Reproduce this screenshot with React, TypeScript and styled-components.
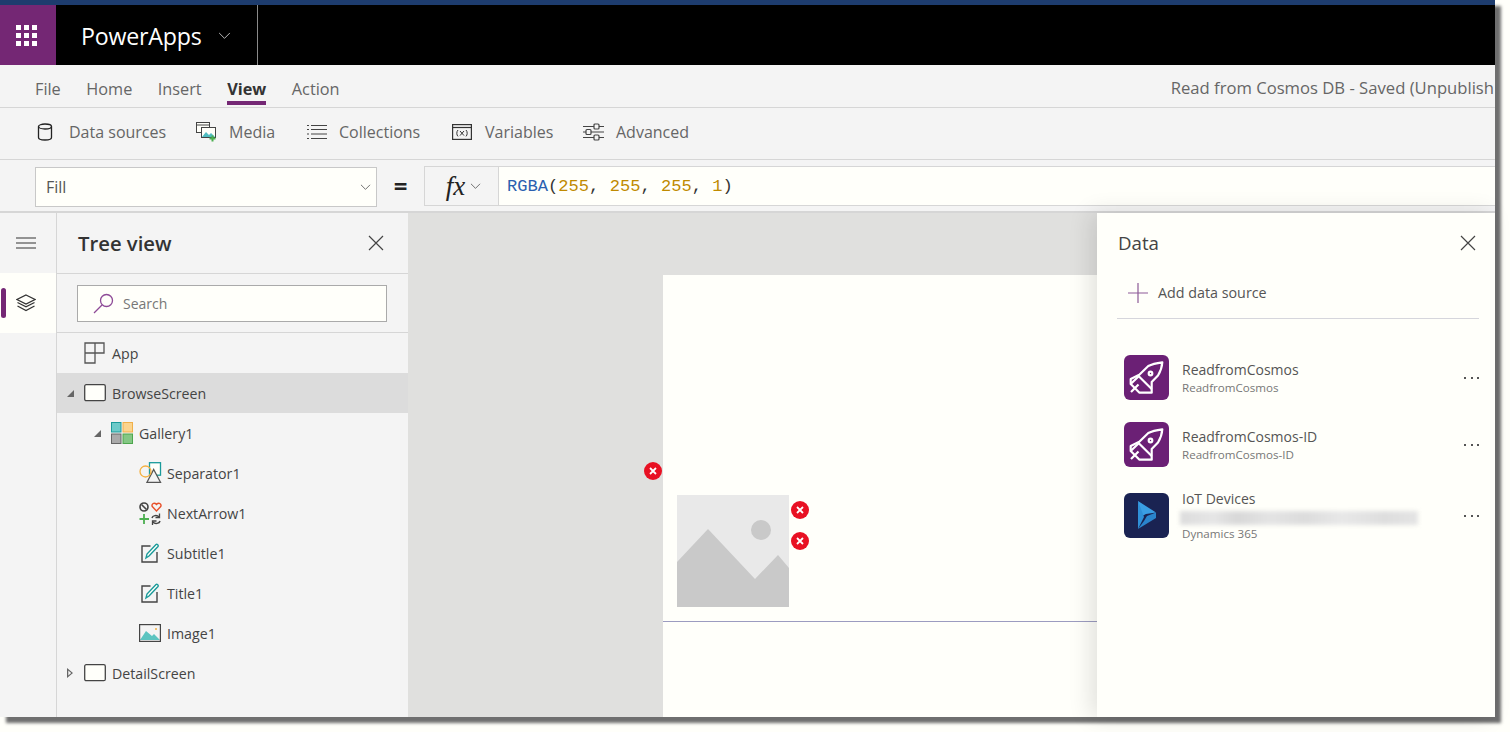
import styled, { createGlobalStyle } from 'styled-components';

const GlobalStyle = createGlobalStyle`
  html, body { margin: 0; padding: 0; background: #fffffa; }
  body { font-family: "Open Sans", "Liberation Sans", sans-serif; }
`;

const Page = styled.div`
  width: 1510px;
  height: 732px;
  overflow: hidden;
`;

const Shell = styled.div`
  width: 1495px;
  height: 717px;
  display: flex;
  flex-direction: column;
  background: #f4f4f4;
  box-shadow: 6px 6px 3px #6f6f6f;
`;

const TopStripe = styled.div`
  height: 5px;
  flex: none;
  background: #1d3c6e;
`;

const TitleBar = styled.header`
  height: 60px;
  flex: none;
  display: flex;
  align-items: stretch;
  background: #000;
  color: #fff;
`;

const Waffle = styled.div`
  width: 56px;
  background: #742774;
  display: flex;
  align-items: center;
  justify-content: center;
  padding-right: 3px;
  box-sizing: border-box;
`;

const WaffleGrid = styled.div`
  display: grid;
  grid-template-columns: repeat(3, 5px);
  grid-auto-rows: 5px;
  gap: 3px;
  & > i { background: #fff; }
`;

const Brand = styled.div`
  width: 202px;
  box-sizing: border-box;
  padding: 2px 0 0 25px;
  display: flex;
  align-items: center;
  gap: 16px;
  border-right: 1px solid #8a8a8a;
  font-size: 23.2px;
  letter-spacing: -0.2px;
`;

const MenuBar = styled.nav`
  height: 42px;
  flex: none;
  display: flex;
  align-items: flex-start;
  padding-left: 35px;
  gap: 25.5px;
  border-bottom: 1px solid #d6d6d6;
`;

const MenuItem = styled.div<{ $active?: boolean }>`
  display: flex;
  align-items: center;
  font-size: 16.3px;
  height: 35px;
  margin-top: 5px;
  padding-top: 6px;
  color: ${p => (p.$active ? '#333' : '#666')};
  font-weight: ${p => (p.$active ? 700 : 400)};
  border-bottom: ${p => (p.$active ? '4px solid #742774' : '4px solid transparent')};
  box-sizing: border-box;
`;

const SaveStatus = styled.div`
  margin-left: auto;
  padding-right: 1px;
  white-space: nowrap;
  font-size: 16.65px;
  line-height: 24px;
  color: #666;
  margin-top: 11px;
`;

const ToolBar = styled.div`
  height: 52px;
  flex: none;
  box-sizing: border-box;
  display: flex;
  align-items: center;
  padding: 0 0 3px 36px;
  border-bottom: 1px solid #d6d6d6;
`;

const ToolButton = styled.div<{ $width: number; $gap: number }>`
  width: ${p => p.$width}px;
  display: flex;
  align-items: center;
  gap: ${p => p.$gap}px;
  font-size: 16px;
  color: #666;
  white-space: nowrap;
`;

const FormulaRow = styled.div`
  height: 53px;
  flex: none;
  box-sizing: border-box;
  display: flex;
  align-items: flex-start;
  padding: 6px 0 0 35px;
  border-bottom: 2px solid #d6d6d6;
`;

const PropertySelect = styled.div`
  width: 342px;
  height: 40px;
  box-sizing: border-box;
  margin-top: 1px;
  display: flex;
  align-items: center;
  justify-content: space-between;
  padding: 0 5px 0 10px;
  background: #fffffa;
  border: 1px solid #c8c8c8;
  font-size: 16px;
  color: #555;
`;

const EqualsSign = styled.div`
  width: 47px;
  text-align: center;
  font-size: 24px;
  font-weight: 700;
  line-height: 40px;
  color: #222;
`;

const FxButton = styled.div`
  width: 75px;
  height: 40px;
  box-sizing: border-box;
  display: flex;
  align-items: center;
  justify-content: center;
  gap: 5px;
  padding-left: 4px;
  border: 1px solid #d6d6d6;
  font-family: "Liberation Serif", serif;
  font-style: italic;
  font-size: 27px;
  color: #222;
`;

const FormulaInput = styled.div`
  flex: 1;
  height: 40px;
  box-sizing: border-box;
  display: flex;
  align-items: center;
  padding-left: 8px;
  background: #fffffa;
  border-top: 1px solid #d6d6d6;
  border-bottom: 1px solid #d6d6d6;
  font-family: "Liberation Mono", monospace;
  font-size: 17.1px;
  color: #333;
  white-space: pre;
`;

const Fn = styled.span`
  color: #2b5fb0;
`;

const Num = styled.span`
  color: #c08a00;
`;

const Workspace = styled.div`
  flex: 1;
  min-height: 0;
  display: flex;
`;

const Rail = styled.aside`
  width: 56px;
  flex: none;
  border-right: 1px solid #d6d6d6;
`;

const RailButton = styled.div<{ $active?: boolean }>`
  height: 60px;
  box-sizing: border-box;
  padding-right: 4px;
  position: relative;
  display: flex;
  align-items: center;
  justify-content: center;
  background: ${p => (p.$active ? '#fffffa' : 'transparent')};
`;

const RailPill = styled.span`
  position: absolute;
  left: 1px;
  top: 15px;
  width: 5px;
  height: 30px;
  border-radius: 3px;
  background: #742774;
`;

const TreePanel = styled.section`
  width: 351px;
  flex: none;
`;

const PanelHeader = styled.div`
  height: 60px;
  display: flex;
  align-items: center;
  justify-content: space-between;
  padding: 0 24px 0 21px;
  border-bottom: 1px solid #d6d6d6;
`;

const TreeTitle = styled.h2`
  margin: 0;
  font-size: 20.3px;
  font-weight: 600;
  color: #333;
`;

const SearchRow = styled.div`
  height: 59px;
  box-sizing: border-box;
  padding: 11px 21px 0 20px;
  border-bottom: 1px solid #d6d6d6;
`;

const SearchBox = styled.div`
  height: 37px;
  box-sizing: border-box;
  display: flex;
  align-items: center;
  gap: 9px;
  padding-left: 15px;
  background: #fffffa;
  border: 1px solid #aaa;
  font-size: 14px;
  color: #777;
`;

const TreeRow = styled.div<{ $indent: number; $selected?: boolean }>`
  height: 40px;
  display: flex;
  align-items: center;
  padding-left: ${p => p.$indent}px;
  background: ${p => (p.$selected ? '#dcdcdc' : 'transparent')};
  font-size: 14.2px;
  color: #444;
`;

const Twisty = styled.span`
  width: 18px;
  flex: none;
  display: flex;
`;

const TreeIconSlot = styled.span`
  width: 28px;
  flex: none;
  display: flex;
`;

const Canvas = styled.main`
  flex: 1;
  min-width: 0;
  position: relative;
  box-sizing: border-box;
  padding: 62px 0 0 255px;
  background: #e0e0de;
`;

const Artboard = styled.div`
  height: 100%;
  position: relative;
  background: #fffffa;
`;

const Placeholder = styled.div`
  position: absolute;
  left: 14px;
  top: 220px;
  width: 112px;
  height: 112px;
  background: #e9e9e9;
  display: flex;
`;

const ErrorDot = styled.span<{ $x: number; $y: number }>`
  position: absolute;
  left: ${p => p.$x}px;
  top: ${p => p.$y}px;
  width: 18px;
  height: 18px;
  border-radius: 50%;
  background: #e81123;
  display: flex;
  align-items: center;
  justify-content: center;
`;

const SeparatorLine = styled.div`
  position: absolute;
  left: 0;
  right: 0;
  top: 346px;
  height: 1px;
  background: #9c9cc0;
`;

const DataPanel = styled.section`
  width: 398px;
  flex: none;
  position: relative;
  box-sizing: border-box;
  padding: 0 16px 0 20px;
  background: #fffffa;
  box-shadow: -6px 0 22px rgba(0, 0, 0, 0.12);
`;

const DataHeader = styled.div`
  height: 60px;
  display: flex;
  align-items: center;
  justify-content: space-between;
  padding-right: 3px;
`;

const DataTitle = styled.h2`
  margin: 0 0 1px 1px;
  font-size: 18.7px;
  font-weight: 400;
  color: #444;
`;

const AddSource = styled.div`
  height: 46px;
  box-sizing: border-box;
  display: flex;
  align-items: center;
  gap: 10px;
  padding: 0 0 6px 11px;
  border-bottom: 1px solid #d6d6dc;
  font-size: 14.3px;
  color: #555;
`;

const SourceList = styled.div`
  padding: 36px 0 0 7px;
`;

const SourceRow = styled.div<{ $gap: number }>`
  display: flex;
  align-items: center;
  height: 45px;
  margin-bottom: ${p => p.$gap}px;
`;

const SourceIcon = styled.div<{ $color: string }>`
  width: 45px;
  height: 45px;
  flex: none;
  border-radius: 6px;
  background: ${p => p.$color};
  display: flex;
`;

const SourceText = styled.div`
  flex: 1;
  min-width: 0;
  padding: 2px 0 0 13px;
`;

const SourceName = styled.div`
  font-size: 14px;
  line-height: 18px;
  color: #555;
`;

const SourceSub = styled.div`
  font-size: 11.6px;
  line-height: 18px;
  color: #777;
`;

const BlurredLine = styled.div`
  width: 238px;
  height: 14px;
  margin: 3px 0 0 -2px;
  background: linear-gradient(90deg, #dcdcdc, #e6e6e6 14%, #d8d8d8 24%, #e4e4e4 38%, #dcdcdc 52%, #e8e8e8 68%, #dedede 86%, #e4e4e4);
  filter: blur(2px);
`;

const MoreDots = styled.div`
  width: 15px;
  flex: none;
  display: flex;
  justify-content: space-between;
  & > i {
    width: 2px;
    height: 2px;
    background: #555;
  }
`;

const Chevron = ({ color = '#555', size = 13 }: { color?: string; size?: number }) => (
  <svg width={size} height={size * 0.6} viewBox="0 0 13 8" fill="none" stroke={color} strokeWidth="1">
    <path d="M1 1l5.5 5.5L12 1" />
  </svg>
);

const CloseIcon = () => (
  <svg width="16" height="16" viewBox="0 0 16 16" stroke="#444" strokeWidth="1.2">
    <path d="M1 1l14 14M15 1L1 15" />
  </svg>
);

const CylinderIcon = () => (
  <svg width="18" height="18" viewBox="0 0 18 18" fill="none" stroke="#222" strokeWidth="1.3">
    <ellipse cx="9" cy="3.5" rx="6.5" ry="2.5" />
    <path d="M2.5 3.5v11c0 1.4 2.9 2.500 6.5 2.500s6.5-1.100 6.5-2.500v-11" />
  </svg>
);

const MediaIcon = () => (
  <svg width="21" height="20" viewBox="0 0 21 20" fill="none">
    <rect x="0.5" y="0.5" width="13" height="10" stroke="#444" fill="#fffffa" />
    <path d="M0.5 3h13" stroke="#444" />
    <rect x="5.5" y="5.5" width="14" height="10" stroke="#444" fill="#fffffa" />
    <path d="M6 15l4-5 3 3 2-2 4 4z" fill="#4fbcc0" />
    <path d="M13.5 16.5h6M16.5 13.5v6" stroke="#4caf50" strokeWidth="2" />
  </svg>
);

const ListIcon = () => (
  <svg width="20" height="16" viewBox="0 0 20 16" stroke="#444" strokeWidth="1.2">
    <path d="M4 1.5h16M4 5.5h16M4 10h16M4 14.5h16M0 1.5h2M0 5.5h2M0 10h2M0 14.5h2" />
  </svg>
);

const VariablesIcon = () => (
  <svg width="20" height="16" viewBox="0 0 20 16" fill="none">
    <rect x="0.6" y="0.6" width="18.8" height="14.8" stroke="#333" strokeWidth="1.2" />
    <path d="M0.6 3.5h18.8" stroke="#333" strokeWidth="1.2" />
    <path d="M6 6c-1.6 1.600-1.600 5 0 6.400M14 6c1.600 1.600 1.600 5 0 6.400M8 7l4 4.600M12 7l-4 4.600" stroke="#333" />
  </svg>
);

const SlidersIcon = () => (
  <svg width="21" height="18" viewBox="0 0 21 18" fill="none" stroke="#444" strokeWidth="1.2">
    <path d="M0 3.5h11M16 3.5h5M0 9h3M8 9h13M0 14.5h11M16 14.5h5" />
    <rect x="11" y="1" width="5" height="5" rx="1" />
    <rect x="3" y="6.5" width="5" height="5" rx="1" />
    <rect x="11" y="12" width="5" height="5" rx="1" />
  </svg>
);

const LayersIcon = () => (
  <svg width="20" height="18" viewBox="0 0 20 18" fill="none" stroke="#333" strokeWidth="1.3">
    <path d="M10 1l9 4.500-9 4.500-9-4.500z" />
    <path d="M1.500 8.500l8.500 4.300 8.500-4.300M1.500 12l8.500 4.500 8.500-4.500" />
  </svg>
);

const HamburgerIcon = () => (
  <svg width="20" height="12" viewBox="0 0 20 12" stroke="#333" strokeWidth="1">
    <path d="M0 1h20M0 6h20M0 11h20" />
  </svg>
);

const SearchGlass = () => (
  <svg width="21" height="21" viewBox="0 0 21 21" fill="none" stroke="#8d4a97" strokeWidth="1.3">
    <circle cx="13.5" cy="7.5" r="6" />
    <path d="M9 12L1 20" />
  </svg>
);

const Arrow = ({ open }: { open?: boolean }) => (
  <svg width="9" height="11" viewBox="0 0 9 11" fill="#666">
    {open ? <path d="M8 2v7H1z" /> : <path d="M1 0l6 5-6 5zM2.300 2.600v4.800L5.200 5z" fillRule="evenodd" />}
  </svg>
);

const AppIcon = () => (
  <svg width="21" height="22" viewBox="0 0 21 22" fill="none" stroke="#555" strokeWidth="1.3">
    <path d="M1 1h10v10H1zM11 1h9v10h-9M1 11v10h10V11" />
  </svg>
);

const ScreenIcon = () => (
  <svg width="22" height="18" viewBox="0 0 22 18" fill="#fffffa" stroke="#444" strokeWidth="1.3">
    <rect x="0.7" y="0.7" width="20.6" height="16" rx="1.5" />
  </svg>
);

const GalleryIcon = () => (
  <svg width="22" height="22" viewBox="0 0 22 22" strokeWidth="1">
    <rect x="0.5" y="0.5" width="9.5" height="9.5" fill="#6ccac9" stroke="#1a9a9a" />
    <rect x="12" y="0.5" width="9.5" height="9.5" fill="#fbd48e" stroke="#f0b04a" />
    <rect x="0.5" y="12" width="9.5" height="9.5" fill="#aaa" stroke="#666" />
    <rect x="12" y="12" width="9.5" height="9.5" fill="#84c784" stroke="#4da64d" />
  </svg>
);

const ShapesIcon = () => (
  <svg width="23" height="22" viewBox="0 0 23 22" fill="none" strokeWidth="1.3">
    <rect x="10.500" y="0.700" width="11" height="12.500" stroke="#1a9a9a" fill="#fffffa" />
    <path d="M14.700 7.500L21.500 20.300H8z" stroke="#555" fill="#f4f4f4" />
    <circle cx="6.500" cy="9.500" r="5.500" stroke="#f5b041" />
  </svg>
);

const IconsIcon = () => (
  <svg width="23" height="24" viewBox="0 0 23 24" fill="none">
    <circle cx="5" cy="6" r="4" stroke="#444" strokeWidth="1.6" />
    <path d="M2.500 3.500l5 5" stroke="#444" strokeWidth="1.6" />
    <path d="M17.500 10l-4-4.200c-1.800-2.400 1.400-5 4-2.400 2.600-2.600 5.800 0 4 2.400z" stroke="#e8502a" strokeWidth="1.4" />
    <path d="M5 13v10M0.500 18h9.500" stroke="#4caf50" strokeWidth="1.8" />
    <path d="M13 17c.5-2.500 5-3.500 7-1M21 20c-.5 2.500-5 3.500-7 1" stroke="#444" strokeWidth="1.5" />
    <path d="M20.500 12.500v4h-4M13.500 24v-4h4" stroke="#444" strokeWidth="1.3" />
  </svg>
);

const EditIcon = () => (
  <svg width="21" height="20" viewBox="-2 0 21 20" fill="none">
    <path d="M9.500 3H1v16h15V9" stroke="#444" strokeWidth="1.4" />
    <path d="M5 15l1-4 9-9.500c1-.8 2.800.8 2 2L8 13z" stroke="#1a9a9a" strokeWidth="1.4" fill="#fffffa" />
  </svg>
);

const PictureIcon = () => (
  <svg width="22" height="18" viewBox="0 0 22 18" fill="none">
    <path d="M1 16l6-9 6 5 2-2 6 6z" fill="#5cc4c0" />
    <rect x="0.600" y="0.600" width="20.800" height="16.800" stroke="#444" strokeWidth="1.2" />
    <circle cx="17" cy="5" r="1" fill="#f5b041" />
  </svg>
);

const PlusIcon = () => (
  <svg width="20" height="20" viewBox="0 0 20 20" stroke="#8d5a97" strokeWidth="1.2">
    <path d="M0 10h20M10 0v20" />
  </svg>
);

const ErrorMark = () => (
  <svg width="8" height="8" viewBox="0 0 8 8" stroke="#fff" strokeWidth="1.8">
    <path d="M1 1l6 6M7 1L1 7" />
  </svg>
);

const RocketIcon = () => (
  <svg width="45" height="45" viewBox="0 0 45 45" fill="none" stroke="#fff" strokeWidth="2.2" strokeLinejoin="round">
    <path d="M38.300 7.300C33 8 28 9 24.300 11L15.300 19.700L6.700 24V29L15.500 37.700H27.700V27L34 20.500C36.500 16.500 38 12 38.300 7.300Z" />
    <path d="M14 20.500L27.700 34M6.700 29L15 21M7 37L14.500 29.500" />
    <circle cx="26.500" cy="18.500" r="1.800" />
  </svg>
);

const DynamicsIcon = () => (
  <svg width="45" height="45" viewBox="0 0 45 45">
    <path d="M14 8l18 11.500-10 1.500-6 3z" fill="#3a9ee4" />
    <path d="M32 19.500V25L14 36l6-8 3-5z" fill="#2a84cc" />
    <path d="M14 8l6 16-6 12z" fill="#2f90d8" />
  </svg>
);

const PlaceholderArt = () => (
  <svg width="112" height="112" viewBox="0 0 112 112">
    <path d="M0 67l31-33 47 50 23-24 11 13v39H0z" fill="#c9c9c9" />
    <circle cx="84" cy="35" r="10" fill="#c9c9c9" />
  </svg>
);

const treeRows = [
  { label: 'App', indent: 9, icon: <AppIcon />, twisty: null },
  { label: 'BrowseScreen', indent: 9, icon: <ScreenIcon />, twisty: 'open', selected: true },
  { label: 'Gallery1', indent: 36, icon: <GalleryIcon />, twisty: 'open' },
  { label: 'Separator1', indent: 64, icon: <ShapesIcon />, twisty: null },
  { label: 'NextArrow1', indent: 64, icon: <IconsIcon />, twisty: null },
  { label: 'Subtitle1', indent: 64, icon: <EditIcon />, twisty: null },
  { label: 'Title1', indent: 64, icon: <EditIcon />, twisty: null },
  { label: 'Image1', indent: 64, icon: <PictureIcon />, twisty: null },
  { label: 'DetailScreen', indent: 9, icon: <ScreenIcon />, twisty: 'closed' },
];

const toolButtons = [
  { label: 'Data sources', icon: <CylinderIcon />, width: 160, gap: 15 },
  { label: 'Media', icon: <MediaIcon />, width: 111, gap: 12 },
  { label: 'Collections', icon: <ListIcon />, width: 145, gap: 12 },
  { label: 'Variables', icon: <VariablesIcon />, width: 131, gap: 13 },
  { label: 'Advanced', icon: <SlidersIcon />, width: 130, gap: 12 },
];

const MoreButton = () => (
  <MoreDots>
    <i />
    <i />
    <i />
  </MoreDots>
);

export default function App() {
  return (
    <Page>
      <GlobalStyle />
      <Shell>
        <TopStripe />
        <TitleBar>
          <Waffle>
            <WaffleGrid>
              {Array.from({ length: 9 }, (_, i) => (
                <i key={i} />
              ))}
            </WaffleGrid>
          </Waffle>
          <Brand>
            PowerApps
            <Chevron color="#bbb" />
          </Brand>
        </TitleBar>
        <MenuBar>
          <MenuItem>File</MenuItem>
          <MenuItem>Home</MenuItem>
          <MenuItem>Insert</MenuItem>
          <MenuItem $active>View</MenuItem>
          <MenuItem>Action</MenuItem>
          <SaveStatus>Read from Cosmos DB - Saved (Unpublish</SaveStatus>
        </MenuBar>
        <ToolBar>
          {toolButtons.map(b => (
            <ToolButton key={b.label} $width={b.width} $gap={b.gap}>
              {b.icon}
              {b.label}
            </ToolButton>
          ))}
        </ToolBar>
        <FormulaRow>
          <PropertySelect>
            Fill
            <Chevron size={11} />
          </PropertySelect>
          <EqualsSign>=</EqualsSign>
          <FxButton>
            fx
            <Chevron size={11} />
          </FxButton>
          <FormulaInput>
            <Fn>RGBA</Fn>(<Num>255</Num>, <Num>255</Num>, <Num>255</Num>, <Num>1</Num>)
          </FormulaInput>
        </FormulaRow>
        <Workspace>
          <Rail>
            <RailButton>
              <HamburgerIcon />
            </RailButton>
            <RailButton $active>
              <RailPill />
              <LayersIcon />
            </RailButton>
          </Rail>
          <TreePanel>
            <PanelHeader>
              <TreeTitle>Tree view</TreeTitle>
              <CloseIcon />
            </PanelHeader>
            <SearchRow>
              <SearchBox>
                <SearchGlass />
                Search
              </SearchBox>
            </SearchRow>
            {treeRows.map(r => (
              <TreeRow key={r.label} $indent={r.indent} $selected={r.selected}>
                <Twisty>{r.twisty && <Arrow open={r.twisty === 'open'} />}</Twisty>
                <TreeIconSlot>{r.icon}</TreeIconSlot>
                {r.label}
              </TreeRow>
            ))}
          </TreePanel>
          <Canvas>
            <Artboard>
              <ErrorDot $x={-19} $y={187}>
                <ErrorMark />
              </ErrorDot>
              <Placeholder>
                <PlaceholderArt />
              </Placeholder>
              <ErrorDot $x={128} $y={226}>
                <ErrorMark />
              </ErrorDot>
              <ErrorDot $x={128} $y={257}>
                <ErrorMark />
              </ErrorDot>
              <SeparatorLine />
            </Artboard>
          </Canvas>
          <DataPanel>
            <DataHeader>
              <DataTitle>Data</DataTitle>
              <CloseIcon />
            </DataHeader>
            <AddSource>
              <PlusIcon />
              Add data source
            </AddSource>
            <SourceList>
              <SourceRow $gap={22}>
                <SourceIcon $color="#6b2075">
                  <RocketIcon />
                </SourceIcon>
                <SourceText>
                  <SourceName>ReadfromCosmos</SourceName>
                  <SourceSub>ReadfromCosmos</SourceSub>
                </SourceText>
                <MoreButton />
              </SourceRow>
              <SourceRow $gap={26}>
                <SourceIcon $color="#6b2075">
                  <RocketIcon />
                </SourceIcon>
                <SourceText>
                  <SourceName>ReadfromCosmos-ID</SourceName>
                  <SourceSub>ReadfromCosmos-ID</SourceSub>
                </SourceText>
                <MoreButton />
              </SourceRow>
              <SourceRow $gap={0}>
                <SourceIcon $color="#1a2352">
                  <DynamicsIcon />
                </SourceIcon>
                <SourceText>
                  <SourceName>IoT Devices</SourceName>
                  <BlurredLine />
                  <SourceSub>Dynamics 365</SourceSub>
                </SourceText>
                <MoreButton />
              </SourceRow>
            </SourceList>
          </DataPanel>
        </Workspace>
      </Shell>
    </Page>
  );
}
